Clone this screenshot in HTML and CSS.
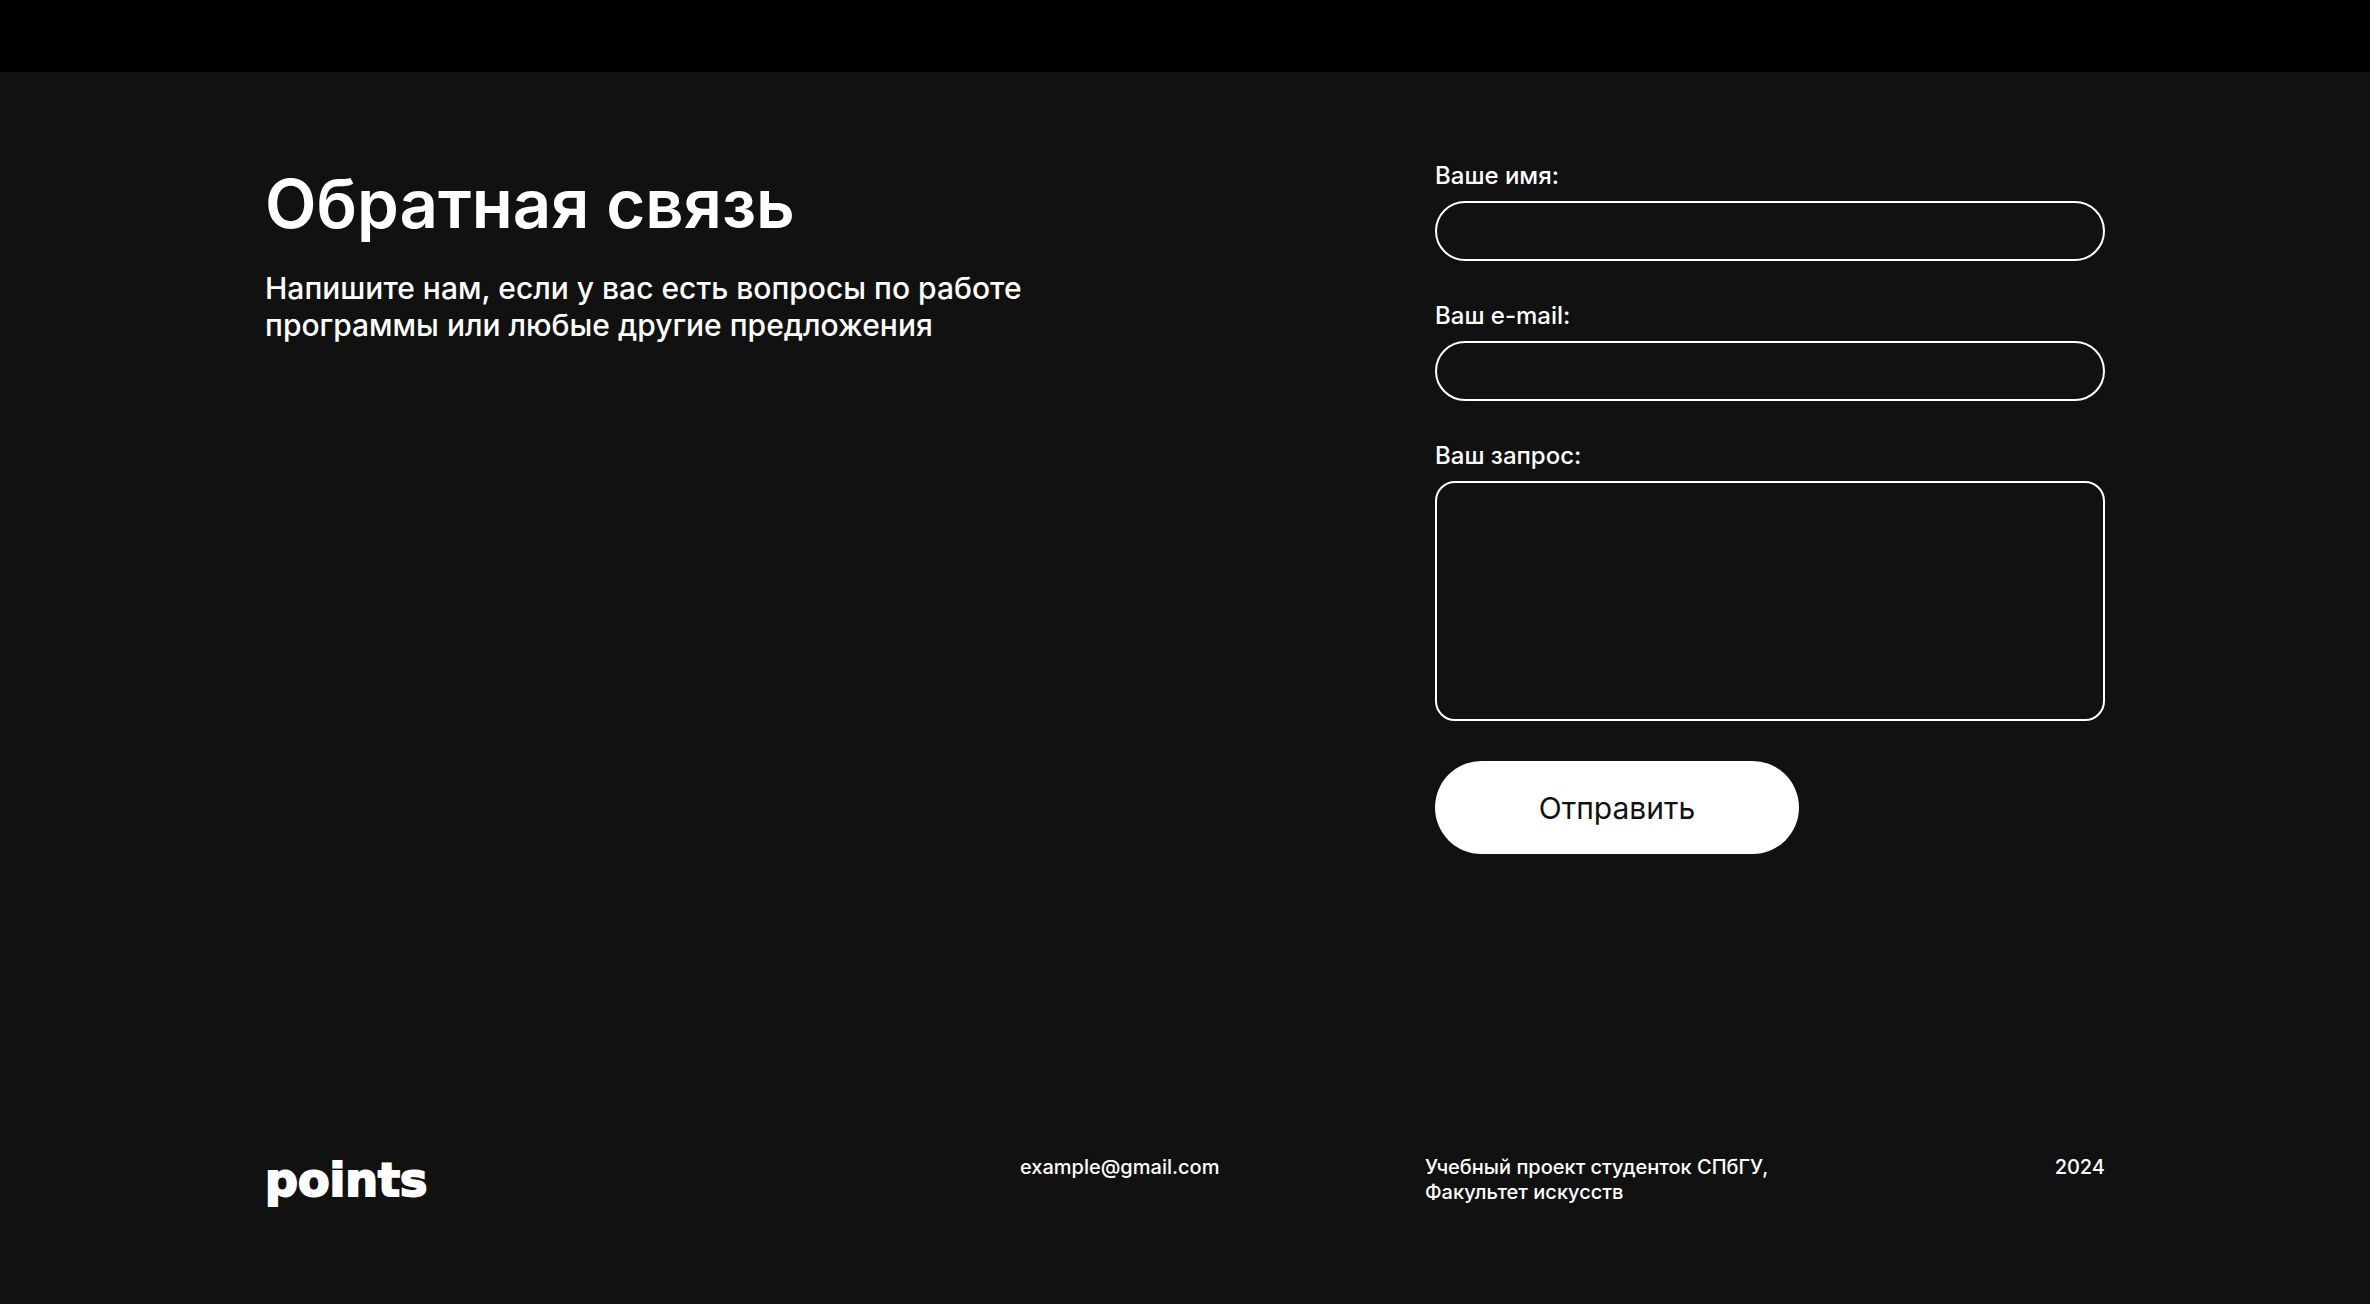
FILE: index.html
```html
<!DOCTYPE html>
<html lang="ru">
<head>
  <meta charset="utf-8">
  <meta name="viewport" content="width=device-width, initial-scale=1">
  <title>Обратная связь — points</title>
  <link rel="stylesheet" href="styles.css">
</head>
<body>
  <div class="page">
    <main class="container feedback">
      <section class="intro">
        <h1 class="intro-title">Обратная связь</h1>
        <p class="intro-text">Напишите нам, если у вас есть вопросы по работе программы или любые другие предложения</p>
      </section>
      <form class="form">
        <div class="field">
          <label for="name">Ваше имя:</label>
          <input class="control" id="name" name="name" type="text">
        </div>
        <div class="field">
          <label for="email">Ваш e-mail:</label>
          <input class="control" id="email" name="email" type="email">
        </div>
        <div class="field">
          <label for="message">Ваш запрос:</label>
          <textarea class="control control-area" id="message" name="message"></textarea>
        </div>
        <button class="submit" type="submit">Отправить</button>
      </form>
    </main>
    <footer class="container footer">
      <a class="logo" href="#">points</a>
      <a class="mail" href="mailto:example@gmail.com">example@gmail.com</a>
      <p class="about">Учебный проект студенток СПбГУ,<br>Факультет искусств</p>
      <p class="year">2024</p>
    </footer>
  </div>
</body>
</html>
```
FILE: styles.css
```css
* {
  box-sizing: border-box;
}

body {
  margin: 0;
  background: #fff;
  color: #fff;
  font-family: Inter, "Liberation Sans", sans-serif;
  font-weight: 500;
}

h1,
p {
  margin: 0;
}

.page {
  display: flex;
  flex-direction: column;
  min-height: calc(100vh - 4px);
  border-top: 72px solid #000;
  background: #111;
}

.container {
  width: 100%;
  max-width: 1920px;
  margin: 0 auto;
  padding: 0 40px;
}

.feedback {
  display: grid;
  grid-template-columns: minmax(0, 1fr) minmax(0, 670px);
  gap: 40px;
  padding-top: 89px;
}

.intro {
  padding-top: 2px;
}

.intro-title {
  font-size: 67px;
  font-weight: 600;
  line-height: 82px;
}

.intro-text {
  max-width: 770px;
  margin-top: 25px;
  font-size: 30px;
  line-height: 37px;
}

.form {
  display: flex;
  flex-direction: column;
  gap: 40px;
}

.field {
  display: flex;
  flex-direction: column;
  gap: 10px;
  font-size: 24px;
  line-height: 30px;
}

.control {
  display: block;
  width: 100%;
  height: 60px;
  padding: 0 24px;
  border: 2px solid #fff;
  border-radius: 30px;
  background: transparent;
  color: inherit;
  font: inherit;
}

.control-area {
  height: 240px;
  padding: 16px 24px;
  border-radius: 20px;
  resize: none;
}

.submit {
  width: 364px;
  height: 93px;
  border: 0;
  border-radius: 47px;
  background: #fff;
  color: #111;
  font-family: inherit;
  font-size: 30px;
  font-weight: 400;
}

.footer {
  display: grid;
  grid-template-columns: 755px 405px 1fr auto;
  margin-top: auto;
  padding-bottom: 99px;
  font-size: 20px;
  line-height: 25px;
}

.logo,
.mail {
  color: inherit;
  text-decoration: none;
}

.logo {
  font-family: "DejaVu Sans", sans-serif;
  font-size: 46px;
  font-weight: 700;
  line-height: 50px;
  -webkit-text-stroke: 2px #fff;
}
```
